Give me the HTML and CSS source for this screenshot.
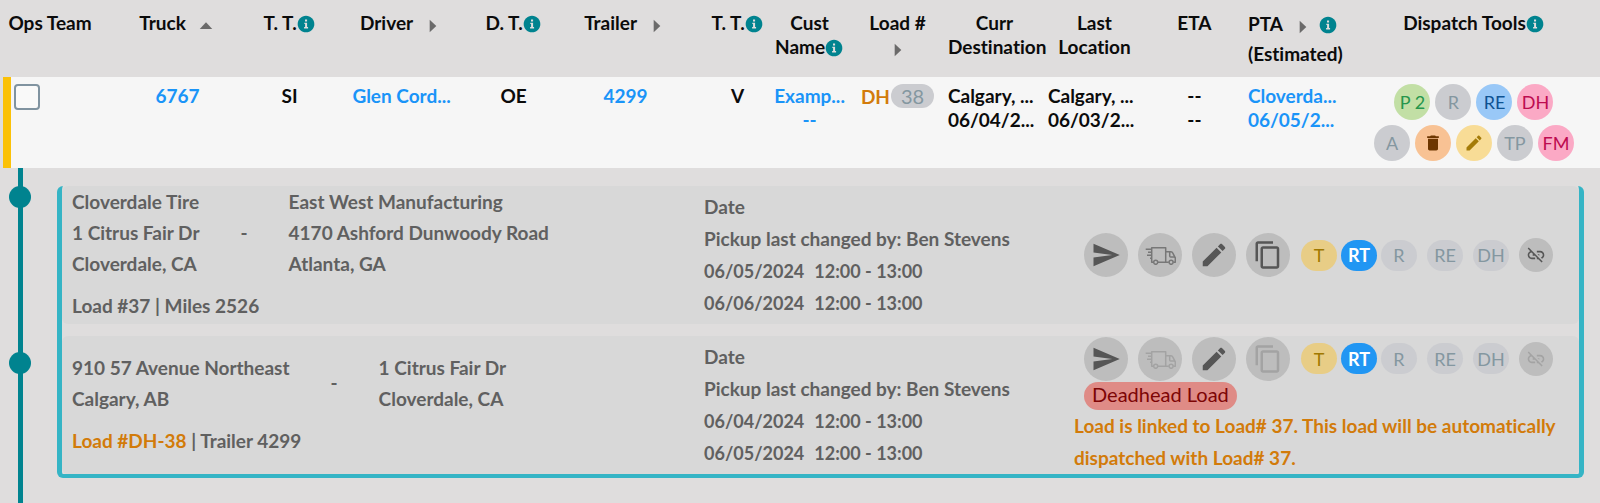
FILE: index.html
```html
<!DOCTYPE html>
<html lang="en">
<head>
<meta charset="utf-8">
<title>Dispatch Board</title>
<link rel="stylesheet" href="styles.css">
</head>
<body>
<svg class="sprite" aria-hidden="true">
  <symbol id="info" viewBox="0 0 24 24"><path d="M12 2C6.48 2 2 6.48 2 12s4.48 10 10 10 10-4.48 10-10S17.52 2 12 2z"/><path fill="#dfdddd" d="M10 10.5h3.3v5.2h1.2v1.6H9.7v-1.6h1.2v-3.6H10zM10.8 6.6h2.5v2.3h-2.5z"/></symbol>
  <symbol id="right" viewBox="0 0 24 24"><path d="M8 4.500l8 7.500-8 7.500z"/></symbol>
  <symbol id="up" viewBox="0 0 24 24"><path d="M4.500 15.500l7.500-8 7.500 8z"/></symbol>
  <symbol id="send" viewBox="0 0 24 24"><path d="M2.010 21L23 12 2.010 3 2 10l15 2-15 2z"/></symbol>
  <symbol id="edit" viewBox="0 0 24 24"><path d="M3 17.250V21h3.750L17.810 9.940l-3.750-3.750L3 17.250zM20.710 7.040c.39-.39.39-1.020 0-1.410l-2.340-2.340c-.39-.39-1.020-.39-1.410 0l-1.830 1.830 3.750 3.750 1.830-1.830z"/></symbol>
  <symbol id="copy" viewBox="0 0 24 24"><path d="M16 1H4c-1.100 0-2 .9-2 2v14h2V3h12V1zm3 4H8c-1.100 0-2 .9-2 2v14c0 1.100.9 2 2 2h11c1.100 0 2-.9 2-2V7c0-1.100-.9-2-2-2zm0 16H8V7h11v14z"/></symbol>
  <symbol id="delete" viewBox="0 0 24 24"><path d="M6 19c0 1.100.9 2 2 2h8c1.100 0 2-.9 2-2V7H6v12zM19 4h-3.500l-1-1h-5l-1 1H5v2h14V4z"/></symbol>
  <symbol id="unlink" viewBox="0 0 24 24"><path d="M17 7h-4v1.900h4c1.710 0 3.100 1.390 3.100 3.100 0 1.430-.98 2.630-2.310 2.980l1.460 1.460C20.880 15.610 22 13.950 22 12c0-2.760-2.240-5-5-5zm-1 4h-2.190l2 2H16v-2zM2 4.270l3.110 3.110C3.290 8.120 2 9.910 2 12c0 2.760 2.240 5 5 5h4v-1.900H7c-1.710 0-3.100-1.390-3.100-3.100 0-1.590 1.210-2.900 2.760-3.070L8.730 11H8v2h2.730L13 15.270V17h1.730l4.010 4L20 19.740 3.270 3 2 4.270z"/></symbol>
  <symbol id="van" viewBox="0 0 32 20"><g fill="none" stroke="currentColor" stroke-width="1.500" stroke-linejoin="round"><path d="M9.500 17.200H7.700V2.700h14v14.500H14M21.700 6.700h5.300q1.200 0 1.700 1.200l2.600 5v4.300h-2M24.800 17.200H21.700"/><path d="M25.700 6.900v4.200q0 1 1 1h4.300M1.700 4.200h6M4 7.200h3.700M3 10.200h4.700M6 13.200h1.700"/><circle cx="11.700" cy="17.300" r="2"/><circle cx="27.100" cy="17.300" r="2"/></g></symbol>
</svg>
<main>
<table class="board">
  <colgroup>
    <col class="c-ops"><col class="c-wide"><col class="c-tt"><col class="c-wide"><col class="c-tt"><col class="c-wide"><col class="c-tt"><col class="c-cust"><col class="c-load"><col class="c-place"><col class="c-place"><col class="c-place"><col class="c-place"><col class="c-tools">
  </colgroup>
  <thead>
    <tr>
      <th>Ops Team</th>
      <th>Truck<svg class="sort"><use href="#up"/></svg></th>
      <th>T. T.<svg class="info"><use href="#info"/></svg></th>
      <th>Driver<svg class="sort"><use href="#right"/></svg></th>
      <th>D. T.<svg class="info"><use href="#info"/></svg></th>
      <th>Trailer<svg class="sort"><use href="#right"/></svg></th>
      <th>T. T.<svg class="info"><use href="#info"/></svg></th>
      <th>Cust<br>Name<svg class="info"><use href="#info"/></svg></th>
      <th>Load #<br><svg class="sort below"><use href="#right"/></svg></th>
      <th class="place">Curr<br>Destination</th>
      <th class="place">Last<br>Location</th>
      <th class="place">ETA</th>
      <th class="pta">PTA<svg class="sort"><use href="#right"/></svg><svg class="info"><use href="#info"/></svg><br>(Estimated)</th>
      <th>Dispatch Tools<svg class="info"><use href="#info"/></svg></th>
    </tr>
  </thead>
  <tbody>
    <tr>
      <td class="select"><input type="checkbox" aria-label="Select truck 6767"></td>
      <td><a href="#truck">6767</a></td>
      <td>SI</td>
      <td><a href="#driver">Glen Cord...</a></td>
      <td>OE</td>
      <td><a href="#trailer">4299</a></td>
      <td>V</td>
      <td><a href="#customer">Examp...<br>--</a></td>
      <td><span class="dh">DH</span><span class="count">38</span></td>
      <td class="left">Calgary, ...<br>06/04/2...</td>
      <td class="left">Calgary, ...<br>06/03/2...</td>
      <td class="place">--<br>--</td>
      <td class="left"><a href="#pta">Cloverda...<br>06/05/2...</a></td>
      <td>
        <div class="tools">
          <button class="tool green">P 2</button><button class="tool">R</button><button class="tool blue">RE</button><button class="tool pink">DH</button>
        </div>
        <div class="tools">
          <button class="tool">A</button><button class="tool orange" aria-label="Delete"><svg><use href="#delete"/></svg></button><button class="tool yellow" aria-label="Edit"><svg><use href="#edit"/></svg></button><button class="tool">TP</button><button class="tool pink">FM</button>
        </div>
      </td>
    </tr>
  </tbody>
</table>
<section class="details">
  <div class="timeline"><span class="dot"></span><span class="dot"></span></div>
  <div class="loads">
    <article class="load">
      <div class="route">
        <div class="stops">
          <address>Cloverdale Tire<br>1 Citrus Fair Dr<br>Cloverdale, CA</address>
          <span>-</span>
          <address>East West Manufacturing<br>4170 Ashford Dunwoody Road<br>Atlanta, GA</address>
        </div>
        <div>Load #37 | Miles 2526</div>
      </div>
      <div class="dates">
        <div>Date</div>
        <div>Pickup last changed by: Ben Stevens</div>
        <div class="window"><span>06/05/2024</span><span>12:00 - 13:00</span></div>
        <div class="window"><span>06/06/2024</span><span>12:00 - 13:00</span></div>
      </div>
      <div class="side">
        <div class="actions">
          <button class="round" aria-label="Send"><svg><use href="#send"/></svg></button>
          <button class="round" aria-label="Dispatch"><svg class="van"><use href="#van"/></svg></button>
          <button class="round" aria-label="Edit"><svg><use href="#edit"/></svg></button>
          <button class="round" aria-label="Copy"><svg><use href="#copy"/></svg></button>
          <div class="pair"><button class="pill gold">T</button><button class="pill active">RT</button><button class="pill">R</button></div>
          <button class="pill">RE</button>
          <button class="pill">DH</button>
          <button class="round small" aria-label="Unlink"><svg><use href="#unlink"/></svg></button>
        </div>
      </div>
    </article>
    <article class="load">
      <div class="route">
        <div class="stops">
          <address>910 57 Avenue Northeast<br>Calgary, AB</address>
          <span>-</span>
          <address>1 Citrus Fair Dr<br>Cloverdale, CA</address>
        </div>
        <div><span class="dh">Load #DH-38</span> | Trailer 4299</div>
      </div>
      <div class="dates">
        <div>Date</div>
        <div>Pickup last changed by: Ben Stevens</div>
        <div class="window"><span>06/04/2024</span><span>12:00 - 13:00</span></div>
        <div class="window"><span>06/05/2024</span><span>12:00 - 13:00</span></div>
      </div>
      <div class="side">
        <div class="actions">
          <button class="round" aria-label="Send"><svg><use href="#send"/></svg></button>
          <button class="round" aria-label="Dispatch" disabled><svg class="van"><use href="#van"/></svg></button>
          <button class="round" aria-label="Edit"><svg><use href="#edit"/></svg></button>
          <button class="round" aria-label="Copy" disabled><svg><use href="#copy"/></svg></button>
          <div class="pair"><button class="pill gold">T</button><button class="pill active">RT</button><button class="pill">R</button></div>
          <button class="pill">RE</button>
          <button class="pill">DH</button>
          <button class="round small" aria-label="Unlink" disabled><svg><use href="#unlink"/></svg></button>
        </div>
        <span class="deadhead">Deadhead Load</span>
        <p class="note">Load is linked to Load# 37. This load will be automatically dispatched with Load# 37.</p>
      </div>
    </article>
  </div>
</section>
</main>
</body>
</html>
```
FILE: styles.css
```css
* { box-sizing: border-box; }
body {
  margin: 0;
  background: #dfdddd;
  color: #0b0b0b;
  font: 700 19px/24px Lato, sans-serif;
  font-variant-ligatures: none;
}
main { min-height: 100vh; display: flex; flex-direction: column; }
button { border: 0; padding: 0; font: 400 18px/24px Lato, sans-serif; color: #8497a0; display: flex; align-items: center; justify-content: center; flex: none; }
svg { fill: currentColor; flex: none; }
a { color: #1a94f8; text-decoration: none; }
.sprite { display: none; }

.board { width: 100%; border-collapse: collapse; table-layout: fixed; }
.c-ops { width: 6.250%; }
.c-wide { width: 9.700%; }
.c-tt { width: 4.300%; }
.c-cust { width: 4.700%; }
.c-load { width: 6.300%; }
.c-place { width: 6.250%; }
th, td { padding: 0; vertical-align: top; white-space: nowrap; text-align: center; }
th { height: 77px; padding-top: 11px; font-weight: 700; }
td { height: 91px; padding-top: 7px; }
tbody tr { background: #f6f6f6; }
.place { padding-right: 7px; }
.sort { width: 20px; height: 20px; margin-left: 10px; vertical-align: -6px; fill: #6b6a6a; }
.sort.below { margin: 0; }
.info { width: 20px; height: 20px; margin-left: -1px; vertical-align: -4px; fill: #00838f; }
.pta { text-align: left; line-height: 30px; padding-top: 9px; }
.pta .info { margin-left: 5px; }
.left { text-align: left; }
.select { text-align: left; background: linear-gradient(to right, #dfdddd 3px, #fbc107 3px, #fbc107 11px, transparent 11px); padding-left: 14px; }
.select input { appearance: none; display: block; width: 26px; height: 26px; margin: 0; border: 2px solid #8093a0; border-radius: 4px; background: #f9f9f9; }
.dh { color: #d27b0a; }
.count { display: inline-block; padding: 0 10px; margin-left: 1px; border-radius: 12px; background: #cbccd0; color: #8497a0; font-weight: 400; font-size: 20px; }
.tools { display: flex; justify-content: center; gap: 5px; margin-bottom: 5px; }
.tool { width: 36px; height: 36px; border-radius: 50%; background: #cbccd0; }
.tool svg { width: 20px; height: 20px; }
.green { background: #c2dfa5; color: #25964c; }
.blue { background: #99c8f7; color: #0d5292; }
.pink { background: #fba9c5; color: #bd0b50; }
.orange { background: #f8c294; color: #6d3600; }
.yellow { background: #f8dc96; color: #a47b08; }

.details { flex: 1; display: flex; gap: 26px; padding: 0 16px 0 9px; color: #606060; }
.timeline { flex: none; width: 22px; display: flex; flex-direction: column; align-items: center; gap: 144px; padding-top: 18px; background: linear-gradient(#00838f, #00838f) center / 5px 100% no-repeat; }
.dot { width: 22px; height: 22px; border-radius: 50%; background: #00838f; }
.loads { flex: 1; align-self: flex-start; margin-top: 18px; display: flex; flex-direction: column; gap: 12px; border: solid #35b4c5; border-width: 0 5px 4px; border-radius: 6px; }
.load { display: grid; grid-template-columns: 632fr 370fr 505fr; align-items: center; min-height: 138px; padding-left: 10px; border-radius: 6px; background: #d8d8d8; }
.route { display: grid; gap: 11px; padding-bottom: 3px; line-height: 31px; }
.stops { display: flex; align-items: center; gap: 41px; }
address { font-style: normal; }
.dates, .note { line-height: 32px; }
.window { display: flex; gap: 10px; font-size: 18px; }
.actions { display: flex; align-items: center; gap: 10px; padding-left: 10px; }
.round { width: 44px; height: 44px; border-radius: 50%; background: #bdbdbd; color: #565656; }
.round svg { width: 30px; height: 30px; }
.round .van { width: 32px; height: 20px; color: #777; }
.round.small { width: 34px; height: 34px; }
.round.small svg { width: 20px; height: 20px; }
.round:disabled, .round:disabled .van { color: #a3a3a3; }
.pair { display: flex; gap: 4px; margin-left: 1px; }
.pill { width: 36px; height: 31px; border-radius: 16px; background: #cbccd0; }
.gold { background: #e8cd86; color: #a07800; }
.active { background: #2196f3; color: #fff; font-weight: 700; }
.deadhead { display: block; width: fit-content; margin: 1px 0 0 10px; padding: 0 8px 4px; border-radius: 14px; background: #df8b86; color: #7d0505; font-size: 20px; font-weight: 400; }
.note { margin: 0; color: #d27b0a; }
```
